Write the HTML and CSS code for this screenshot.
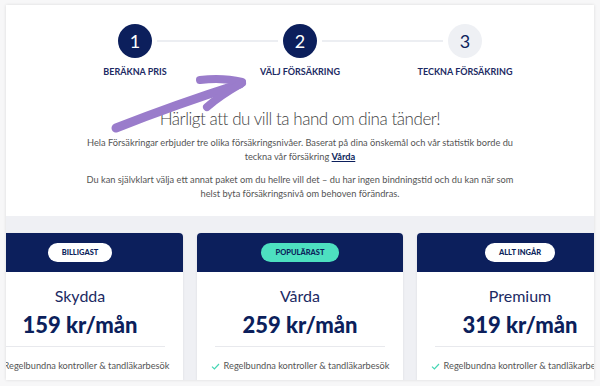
FILE: index.html
```html
<!DOCTYPE html>
<html lang="sv">
<head>
<meta charset="utf-8">
<title>Välj försäkring</title>
<link rel="stylesheet" href="styles.css">
</head>
<body>
<div class="frame">
  <section class="intro">
    <div class="steps">
      <div class="circles">
        <span class="circle done">1</span>
        <span class="connector"></span>
        <span class="circle done">2</span>
        <span class="connector"></span>
        <span class="circle todo">3</span>
      </div>
      <div class="labels">
        <span>BERÄKNA PRIS</span>
        <span>VÄLJ FÖRSÄKRING</span>
        <span>TECKNA FÖRSÄKRING</span>
      </div>
    </div>
    <h1 class="heading">Härligt att du vill ta hand om dina tänder!</h1>
    <p class="text">Hela Försäkringar erbjuder tre olika försäkringsnivåer. Baserat på dina önskemål och vår statistik borde du teckna vår försäkring <a href="#" class="link">Vårda</a></p>
    <p class="text second">Du kan självklart välja ett annat paket om du hellre vill det – du har ingen bindningstid och du kan när som helst byta försäkringsnivå om behoven förändras.</p>
    <svg class="arrow" width="150" height="70" viewBox="0 0 150 70" aria-hidden="true">
      <g fill="none" stroke="#9a7ccb" stroke-linecap="round" stroke-linejoin="round">
        <path d="M10 55 C48 40 90 25 134 11" stroke-width="9"/>
        <path d="M94 7 C110 5 124 6 136 9" stroke-width="8"/>
        <path d="M136 10 C122 18 110 26 101 34" stroke-width="8"/>
      </g>
    </svg>
  </section>
  <section class="plans">
    <div class="card">
      <div class="card-head"><span class="badge">BILLIGAST</span></div>
      <div class="card-body">
        <div class="plan-name">Skydda</div>
        <div class="price">159 kr/mån</div>
        <div class="divider"></div>
        <div class="feature"><svg class="check" width="9" height="7" viewBox="0 0 9 7"><path d="M1 3.6 L3.4 6 L8 1" fill="none" stroke="#45d6b4" stroke-width="1.2"/></svg>Regelbundna kontroller &amp; tandläkarbesök</div>
      </div>
    </div>
    <div class="card">
      <div class="card-head"><span class="badge teal">POPULÄRAST</span></div>
      <div class="card-body">
        <div class="plan-name">Vårda</div>
        <div class="price">259 kr/mån</div>
        <div class="divider"></div>
        <div class="feature"><svg class="check" width="9" height="7" viewBox="0 0 9 7"><path d="M1 3.6 L3.4 6 L8 1" fill="none" stroke="#45d6b4" stroke-width="1.2"/></svg>Regelbundna kontroller &amp; tandläkarbesök</div>
      </div>
    </div>
    <div class="card">
      <div class="card-head"><span class="badge">ALLT INGÅR</span></div>
      <div class="card-body">
        <div class="plan-name">Premium</div>
        <div class="price">319 kr/mån</div>
        <div class="divider"></div>
        <div class="feature"><svg class="check" width="9" height="7" viewBox="0 0 9 7"><path d="M1 3.6 L3.4 6 L8 1" fill="none" stroke="#45d6b4" stroke-width="1.2"/></svg>Regelbundna kontroller &amp; tandläkarbesök</div>
      </div>
    </div>
  </section>
</div>
</body>
</html>
```
FILE: styles.css
```css
* { box-sizing: border-box; }
html, body { margin: 0; }
body {
  background: #f7f7f8;
  font-family: "Lato", "Liberation Sans", sans-serif;
  padding: 5px 6px 6px;
  width: 600px;
  height: 386px;
  overflow: hidden;
}
.frame {
  height: 375px;
  background: #eff0f4;
  overflow: hidden;
  box-shadow: 0 0 3px rgba(0,0,0,0.12);
  display: flex;
  flex-direction: column;
}
.intro {
  position: relative;
  background: #fff;
  padding: 19px 0 15px;
  text-align: center;
}
.steps { display: flex; flex-direction: column; align-items: center; }
.circles {
  display: flex;
  align-items: center;
  width: 364px;
}
.circle {
  width: 34px;
  height: 34px;
  border-radius: 50%;
  display: flex;
  align-items: center;
  justify-content: center;
  font-size: 18px;
  flex-shrink: 0;
}
.circle.done { background: #0c1f5c; color: #fff; }
.circle.todo { background: #eef0f4; color: #0c1f5c; }
.connector {
  flex: 1;
  height: 2px;
  margin: 0 5px;
  background: #eceef2;
}
.labels {
  display: grid;
  grid-template-columns: repeat(3, 165px);
  margin-top: 8px;
  font-size: 9px;
  line-height: 12px;
  font-weight: 700;
  color: #1c2a63;
}
.heading {
  margin: 30px 0 0;
  font-size: 17px;
  letter-spacing: -0.45px;
  line-height: 22px;
  font-weight: 300;
  color: #444;
}
.text {
  margin: 6px auto 0;
  max-width: 440px;
  font-size: 9.25px;
  line-height: 14px;
  color: #555;
}
.text.second { margin-top: 9px; }
.link { color: #0c1f5c; font-weight: 700; }
.arrow {
  position: absolute;
  left: 100px;
  top: 68px;
}
.plans {
  flex: 1;
  display: flex;
  justify-content: center;
  gap: 14px;
  padding-top: 17px;
}
.card {
  flex: 0 0 206px;
  background: #fff;
  border-radius: 4px 4px 0 0;
  box-shadow: 0 1px 3px rgba(0,0,0,0.08);
  text-align: center;
}
.card-head {
  height: 39px;
  background: #0c1f5c;
  border-radius: 4px 4px 0 0;
  display: flex;
  align-items: center;
  justify-content: center;
}
.badge {
  height: 19px;
  padding: 0 14px;
  border-radius: 10px;
  background: #fff;
  color: #0c1f5c;
  font-size: 7.5px;
  font-weight: 900;
  display: flex;
  align-items: center;
}
.badge.teal { background: #4de0c0; }
.card-body { padding: 14px 18px 0; }
.plan-name {
  font-size: 16px;
  line-height: 20px;
  color: #1c2a63;
}
.price {
  margin-top: 5px;
  font-size: 22px;
  line-height: 28px;
  font-weight: 900;
  color: #0c1f5c;
}
.divider {
  margin-top: 7px;
  height: 1px;
  background: #e8e9ed;
}
.feature {
  margin: 12px -10px 0;
  font-size: 9.2px;
  line-height: 14px;
  color: #555;
  white-space: nowrap;
  display: flex;
  align-items: center;
  justify-content: center;
  gap: 4px;
}
```
